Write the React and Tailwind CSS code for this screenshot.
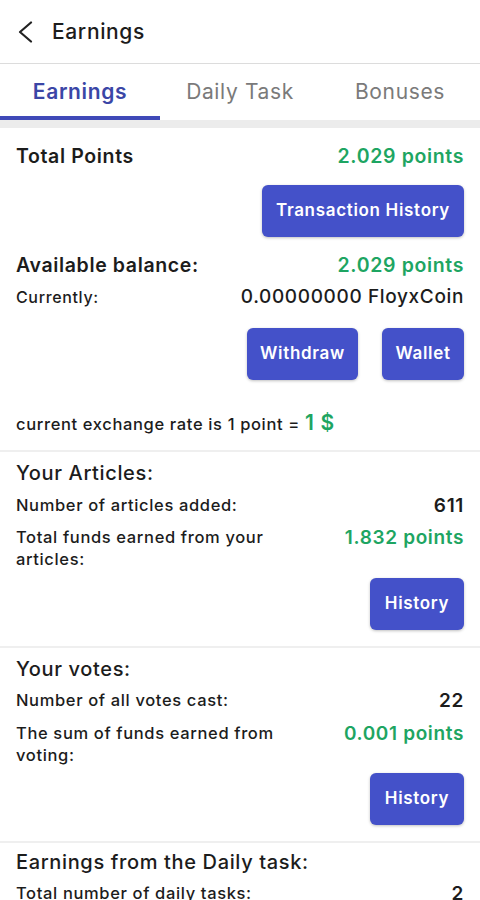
const font = { fontFamily: "Inter, 'Noto Sans', sans-serif" };

function Btn({ children, className = "" }) {
  return (
    <button
      className={`h-[52px] rounded-md bg-[#4451c9] text-white text-[17px] font-semibold tracking-[0.04em] shadow-[0_1px_3px_rgba(0,0,0,0.25)] ${className}`}
    >
      {children}
    </button>
  );
}

function StatRow({ label, value, green, className = "" }) {
  return (
    <div className={`flex items-start justify-between gap-6 ${className}`}>
      <span className="text-[16.5px] leading-[22px] font-medium text-[#1c1c1c] max-w-[275px]">
        {label}
      </span>
      <span
        className={`text-[19px] leading-[24px] font-semibold whitespace-nowrap ${
          green ? "text-[#1ea562]" : "text-[#1c1c1c]"
        }`}
      >
        {value}
      </span>
    </div>
  );
}

export default function App() {
  return (
    <div className="w-[480px] h-[900px] overflow-hidden bg-white tracking-[0.04em]" style={font}>
      <div className="h-16 flex items-center border-b border-[#dcdcdc]">
        <svg className="ml-[17px]" width="16" height="22" viewBox="0 0 16 22" fill="none">
          <polyline points="14,1.5 3,11 14,20.5" stroke="#222" strokeWidth="2.2" strokeLinecap="round" strokeLinejoin="round" />
        </svg>
        <span className="ml-[19px] text-[21px] font-medium text-[#1c1c1c]">Earnings</span>
      </div>

      <div className="flex h-[64px] border-b-[8px] border-[#ececec]">
        <div className="w-[160px] flex items-center justify-center border-b-4 border-[#3f49b8] pt-1 text-[21px] font-semibold text-[#3b46a6]">
          Earnings
        </div>
        <div className="w-[160px] flex items-center justify-center text-[21px] text-[#7a7a7a]">
          Daily Task
        </div>
        <div className="w-[160px] flex items-center justify-center text-[21px] text-[#7a7a7a]">
          Bonuses
        </div>
      </div>

      <div className="px-4 pt-4 pb-[14px] border-b-2 border-[#efefef]">
        <div className="flex justify-between items-center leading-[24px]">
          <span className="text-[19.5px] font-semibold text-[#1c1c1c]">Total Points</span>
          <span className="text-[19.5px] font-semibold text-[#1ea562]">2.029 points</span>
        </div>
        <div className="flex justify-end mt-[17px]">
          <Btn className="w-[202px]">Transaction History</Btn>
        </div>
        <div className="flex justify-between items-center leading-[24px] mt-4">
          <span className="text-[19.5px] font-semibold text-[#1c1c1c]">Available balance:</span>
          <span className="text-[19.5px] font-semibold text-[#1ea562]">2.029 points</span>
        </div>
        <div className="flex justify-between items-center mt-[10px]">
          <span className="text-[16px] leading-[20px] font-medium text-[#1c1c1c]">Currently:</span>
          <span className="text-[19px] leading-[20px] font-medium text-[#1c1c1c]">0.00000000 FloyxCoin</span>
        </div>
        <div className="flex justify-end gap-6 mt-[21px]">
          <Btn className="w-[111px]">Withdraw</Btn>
          <Btn className="w-[82px]">Wallet</Btn>
        </div>
        <p className="mt-[31px] text-[16.5px] leading-[24px] font-medium text-[#1c1c1c]">
          current exchange rate is 1 point ={" "}
          <span className="text-[21px] font-semibold text-[#1ea562]">1 $</span>
        </p>
      </div>

      <div className="px-4 pt-[8px] pb-4 border-b-2 border-[#efefef]">
        <h3 className="text-[20px] leading-[26px] font-medium text-[#1c1c1c]">Your Articles:</h3>
        <StatRow className="mt-[8px]" label="Number of articles added:" value="611" />
        <StatRow className="mt-[8px]" label="Total funds earned from your articles:" value="1.832 points" green />
        <div className="flex justify-end mt-2">
          <Btn className="w-[94px]">History</Btn>
        </div>
      </div>

      <div className="px-4 pt-[8px] pb-4 border-b-2 border-[#efefef]">
        <h3 className="text-[20px] leading-[26px] font-medium text-[#1c1c1c]">Your votes:</h3>
        <StatRow className="mt-[7px]" label="Number of all votes cast:" value="22" />
        <StatRow className="mt-[9px]" label="The sum of funds earned from voting:" value="0.001 points" green />
        <div className="flex justify-end mt-[7px]">
          <Btn className="w-[94px]">History</Btn>
        </div>
      </div>

      <div className="px-4 pt-[6px]">
        <h3 className="text-[20px] leading-[26px] font-medium text-[#1c1c1c]">
          Earnings from the Daily task:
        </h3>
        <StatRow className="mt-[7px]" label="Total number of daily tasks:" value="2" />
      </div>
    </div>
  );
}
